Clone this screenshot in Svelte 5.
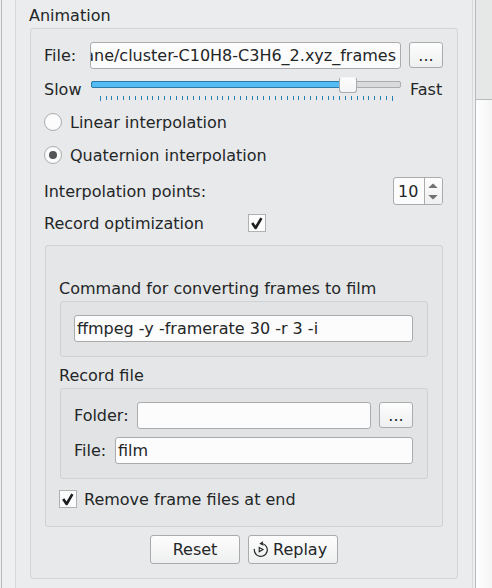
<script>
  let method = $state('quaternion');
  let record = $state(true);
  let removeFrames = $state(true);
  let points = $state(10);
  const ticks = Array.from({ length: 51 }, (_, i) => Math.floor(9 + i * 5.84 + 0.3));
</script>

{#snippet check(on)}
  <span class="check">
    {#if on}
      <svg width="16" height="16" viewBox="0 0 16 16"><path d="M3.2 8 L6.6 13 L12.4 3.2" /></svg>
    {/if}
  </span>
{/snippet}

<div class="window">
  <div class="pane">
    <div class="inner">
      <div class="title">Animation</div>
      <section class="group main">
        <div class="row">
          <span>File:</span>
          <div class="field path"><span>ane/cluster-C10H8-C3H6_2.xyz_frames</span></div>
          <button class="btn dots">...</button>
        </div>

        <div class="row speed">
          <span class="slow">Slow</span>
          <div class="slider">
            <div class="groove"><div class="fill"></div></div>
            <div class="handle"></div>
            <svg class="ticks" width="310" height="5">
              {#each ticks as x, i}
                <rect {x} y="0" width="1" height={i === 0 || i === 50 ? 5 : 4} />
              {/each}
            </svg>
          </div>
          <span class="fast">Fast</span>
        </div>

        <div class="row option linear" role="radio" tabindex="-1" aria-checked={method === 'linear'} onclick={() => (method = 'linear')} onkeydown={() => {}}>
          <span class="radio" class:on={method === 'linear'}></span>
          <span>Linear interpolation</span>
        </div>
        <div class="row option quaternion" role="radio" tabindex="-1" aria-checked={method === 'quaternion'} onclick={() => (method = 'quaternion')} onkeydown={() => {}}>
          <span class="radio" class:on={method === 'quaternion'}></span>
          <span>Quaternion interpolation</span>
        </div>

        <div class="row points">
          <span>Interpolation points:</span>
          <div class="spin">
            <span class="num">{points}</span>
            <span class="arrows">
              <svg width="17" height="26" viewBox="0 0 17 26">
                <path d="M3.3 10 L7.6 5.8 H8.4 L12.7 10 Z M3.3 17 H12.7 L8.4 21.2 H7.6 Z" />
              </svg>
            </span>
          </div>
        </div>

        <div class="row record">
          <span class="record-label">Record optimization</span>
          {@render check(record)}
        </div>

        <section class="group film">
          <div class="sub">Command for converting frames to film</div>
          <section class="group command">
            <div class="field"><span>ffmpeg -y -framerate 30 -r 3 -i</span></div>
          </section>
          <div class="sub second">Record file</div>
          <section class="group target">
            <div class="row">
              <span>Folder:</span>
              <div class="field folder"></div>
              <button class="btn dots">...</button>
            </div>
            <div class="row file">
              <span>File:</span>
              <div class="field name"><span>film</span></div>
            </div>
          </section>
          <div class="row remove">
            {@render check(removeFrames)}
            <span>Remove frame files at end</span>
          </div>
        </section>

        <div class="row buttons">
          <button class="btn action">Reset</button>
          <button class="btn action replay">
            <svg width="16" height="18" viewBox="0 0 16 18">
              <path class="arc" d="M1.4 8.8 A6.5 6.5 0 1 0 12.2 5.1" />
              <path class="arc" d="M12.2 5.1 Q10.8 3.9 9.2 3.5" />
              <path class="head" d="M6.3 3.7 L10.2 1 L9.6 3.3 L10.6 5.8 Z" />
              <path class="play" d="M6.2 7.4 L10 9.6 L6.2 11.8 Z" />
            </svg>
            <span>Replay</span>
          </button>
        </div>
      </section>
    </div>
  </div>
  <div class="scroll"><div class="thumb"></div></div>
</div>

<style>
  .window, .window * { box-sizing: border-box; }
  .window {
    display: flex;
    width: 492px;
    height: 588px;
    overflow: hidden;
    background: #eff0f1;
    color: #232627;
    font: 16px/19px "DejaVu Sans", sans-serif;
    white-space: nowrap;
    padding-left: 1px;
  }
  .pane {
    width: 475px;
    border-left: 1px solid #b5b7b9;
    border-right: 1px solid #b8babb;
    padding: 0 2px 0 13px;
    background: #eeeff1;
  }
  .inner {
    height: 588px;
    border: solid #d6d8da;
    border-width: 0 1px;
    background: #ebecee;
    padding: 6px 14px 0 13px;
  }
  .title { height: 22px; }
  .group { border: 1px solid #cfd1d2; border-radius: 3px; }
  .main {
    width: 428px;
    height: 551px;
    margin-left: 1px;
    background: #e8e9eb;
    padding: 13px 14px 0 13px;
    border-color: #d2d4d5;
  }
  .row { display: flex; align-items: flex-start; }
  .row > span:first-child { flex: none; }
  .main > .row:first-child > span, .target .row > span { padding-top: 4px; }
  .field {
    height: 27px;
    border: 1px solid #a9abac;
    border-radius: 3px;
    background: #fcfcfc;
    padding: 3px 2px;
    overflow: hidden;
  }
  .path {
    display: flex;
    justify-content: flex-end;
    width: 311px;
    margin-left: auto;
    padding-left: 0;
    padding-right: 4px;
  }
  .btn {
    flex: none;
    border: 1px solid #a9abac;
    border-radius: 3px;
    background: linear-gradient(#fdfdfd, #eeefef);
    color: inherit;
    font: inherit;
    padding: 0;
  }
  .dots { width: 34px; height: 26px; margin-left: 8px; }
  .speed { height: 24px; margin-top: 8px; }
  .slow, .fast { padding-top: 3px; }
  .slow { width: 47px; }
  .slider { position: relative; width: 310px; height: 24px; padding-top: 4px; }
  .groove {
    height: 7px;
    border: 1px solid #aaacad;
    border-radius: 2px;
    background: #d9dadb;
  }
  .fill {
    width: 255px;
    height: 7px;
    margin: -1px 0 0 -1px;
    border: 1px solid #2a7ba8;
    border-radius: 2px;
    background: #54bcf3;
  }
  .handle {
    position: absolute;
    left: 248px;
    top: 0;
    width: 18px;
    height: 16px;
    border: 1px solid #a9abac;
    border-top-color: #f4f5f5;
    border-radius: 3px;
    background: linear-gradient(#fdfdfd, #f4f4f4);
  }
  .ticks { display: block; margin-top: 8px; fill: #2980b0; }
  .fast { margin-left: 9px; }
  .option { height: 19px; }
  .linear { margin-top: 12px; }
  .quaternion { margin-top: 14px; }
  .radio {
    display: flex;
    align-items: center;
    justify-content: center;
    width: 18px;
    height: 18px;
    margin-right: 8px;
    border: 1px solid #a9abac;
    border-radius: 50%;
    background: #fcfcfc;
  }
  .radio.on::after {
    content: "";
    width: 8px;
    height: 8px;
    border-radius: 50%;
    background: #555657;
  }
  .points { justify-content: space-between; margin-top: 12px; height: 28px; }
  .points > span { padding-top: 5px; }
  .spin {
    display: flex;
    width: 50px;
    height: 28px;
    border: 1px solid #a9abac;
    border-radius: 3px;
    background: #fcfcfc;
    overflow: hidden;
  }
  .num { width: 30px; padding: 4px 0 0 4px; }
  .arrows { width: 18px; border-left: 1px solid #a9abac; background: linear-gradient(#fdfdfd, #f0f0f0); }
  .arrows svg { display: block; fill: #707273; }
  .record { margin-top: 9px; height: 19px; }
  .record-label { width: 204px; }
  .check {
    flex: none;
    width: 18px;
    height: 18px;
    border: 1px solid #afb1b2;
    background: #fcfcfc;
  }
  .check svg { display: block; fill: none; stroke: #1c1e1f; stroke-width: 2.6; stroke-linejoin: round; stroke-linecap: butt; }
  .film {
    width: 398px;
    height: 282px;
    margin: 12px 0 0 1px;
    padding: 33px 14px 0 13px;
    background: #e5e6e8;
  }
  .sub { height: 22px; }
  .command, .target { margin-left: 1px; width: 368px; background: #e2e3e5; padding: 13px 14px 0 13px; }
  .command { height: 56px; }
  .second { margin-top: 9px; }
  .target { height: 91px; }
  .folder { width: 234px; margin-left: auto; }
  .file { margin-top: 8px; }
  .name { width: 298px; margin-left: auto; }
  .remove { margin-top: 11px; }
  .remove .check { margin-right: 7px; }
  .buttons { margin: 8px 0 0 106px; gap: 8px; }
  .action { width: 90px; height: 29px; }
  .replay { display: flex; align-items: center; padding-left: 4px; gap: 4px; }
  .replay svg { fill: none; stroke: #232627; margin-top: -1px; }
  .arc { stroke-width: 1.2; }
  .head { fill: #232627; stroke: none; }
  .play { stroke-width: 1.1; }
  .scroll {
    width: 16px;
    height: 588px;
    background: #e6e7e7;
    padding-top: 99px;
  }
  .thumb {
    width: 18px;
    height: 500px;
    border-top: 1px solid #b8babb;
    background: linear-gradient(90deg, #fdfdfd 0 3px, #f3f3f3);
  }
</style>
